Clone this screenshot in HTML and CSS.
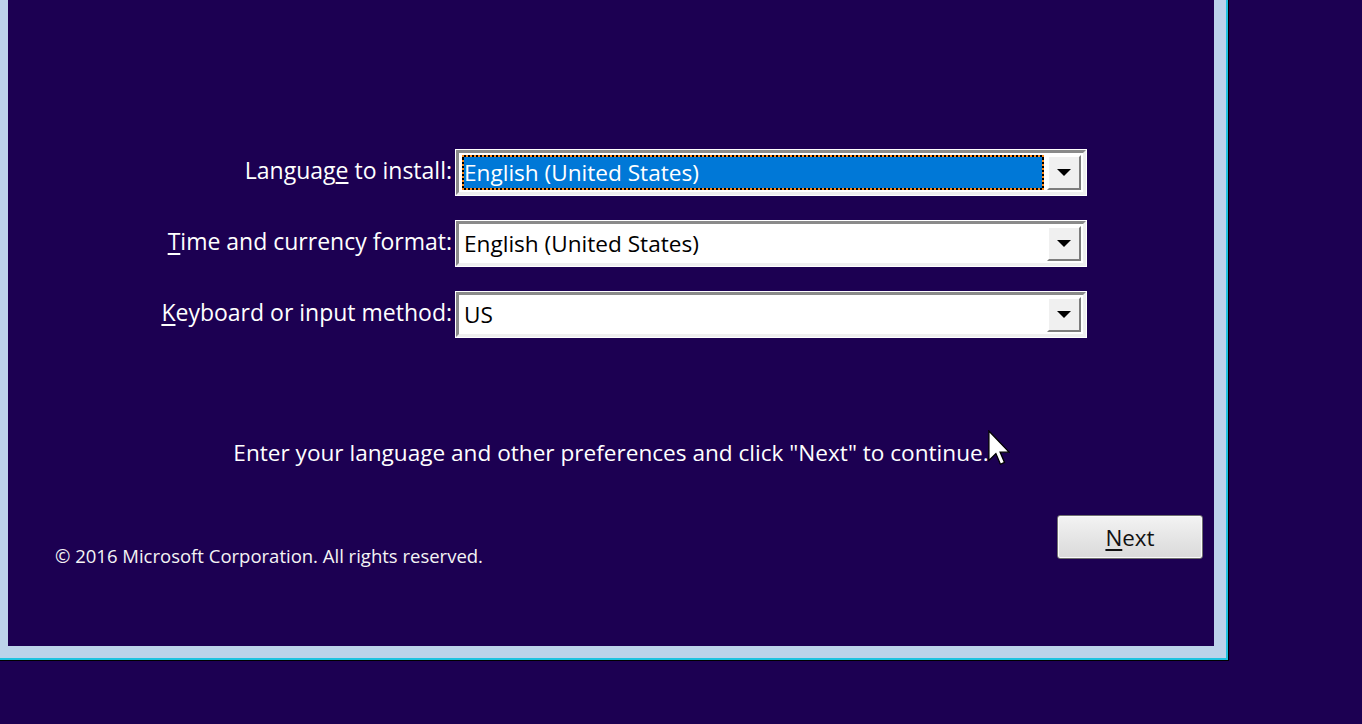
FILE: index.html
```html
<!DOCTYPE html>
<html lang="en">
<head>
<meta charset="utf-8">
<title>Windows Setup</title>
<link rel="stylesheet" href="styles.css">
</head>
<body>
<div class="shadow">
  <div class="edge">
    <div class="window">
      <div class="content">
        <div class="form">
          <label class="label">Languag<u>e</u> to install:</label>
          <div class="select">
            <div class="value focused">English (United States)</div>
            <div class="arrow"><span class="tri"></span></div>
          </div>
          <label class="label"><u>T</u>ime and currency format:</label>
          <div class="select">
            <div class="value">English (United States)</div>
            <div class="arrow"><span class="tri"></span></div>
          </div>
          <label class="label"><u>K</u>eyboard or input method:</label>
          <div class="select">
            <div class="value">US</div>
            <div class="arrow"><span class="tri"></span></div>
          </div>
        </div>
        <p class="hint">Enter your language and other preferences and click "Next" to continue.</p>
        <div class="footer">
          <span class="copy">© 2016 Microsoft Corporation. All rights reserved.</span>
          <button class="next"><u>N</u>ext</button>
        </div>
      </div>
    </div>
  </div>
</div>
<svg class="cursor" width="22" height="36" viewBox="0 0 12 19.5">
  <path d="M0.5 0.5 L0.5 16.5 L4.3 12.8 L6.8 18.6 L9 17.6 L6.6 12 L11.5 12 Z" fill="#fff" stroke="#000" stroke-width="0.7" stroke-linejoin="miter"/>
</svg>
</body>
</html>
```
FILE: styles.css
```css
html, body {
  margin: 0;
  padding: 0;
}
body {
  background: #1c0052;
  width: 1362px;
  height: 724px;
  overflow: hidden;
  position: relative;
  font-family: "Open Sans", "Noto Sans", sans-serif;
  color: #fff;
}
.shadow {
  width: 1229px;
  border-right: 1px solid #000;
  border-bottom: 1px solid #000;
  box-sizing: border-box;
}
.edge {
  border-right: 2px solid #1fc3e0;
  border-bottom: 2px solid #1fc3e0;
}
.window {
  border-left: 8px solid #bcd3ea;
  border-right: 12px solid #bcd3ea;
  border-bottom: 12px solid #bcd3ea;
}
.content {
  height: 646px;
  background: #1c0052;
  display: flex;
  flex-direction: column;
}
.form {
  margin-top: 150px;
  display: grid;
  grid-template-columns: 444px 630px;
  column-gap: 4px;
  row-gap: 26px;
}
.label {
  font-size: 23px;
  text-align: right;
  align-self: center;
  margin-top: -6px;
  white-space: nowrap;
}
.label u, .next u {
  text-underline-offset: 3px;
}
.select {
  height: 45px;
  box-sizing: border-box;
  border: 3px solid;
  border-color: #8a8a8a #efefef #efefef #8a8a8a;
  box-shadow: 0 0 0 1px #ffffff;
  background: #fff;
  padding: 2px 2px 2px 3px;
  display: flex;
  gap: 3px;
}
.value {
  flex: 1;
  color: #000;
  font-size: 22.6px;
  line-height: 35px;
  padding-left: 2px;
  box-sizing: border-box;
  white-space: nowrap;
}
.value.focused {
  color: #fff;
  border: 2px dotted #ff8a1c;
  padding-left: 0;
  line-height: 32px;
  background: linear-gradient(#0078d7, #0078d7) padding-box, linear-gradient(#000, #000) border-box;
}
.arrow {
  width: 34px;
  box-sizing: border-box;
  background: #f0f0f0;
  border: 2px solid;
  border-color: #ffffff #7d7d7d #7d7d7d #ffffff;
  display: flex;
  align-items: center;
  justify-content: center;
}
.tri {
  width: 0;
  height: 0;
  border-left: 7px solid transparent;
  border-right: 7px solid transparent;
  border-top: 7px solid #000;
}
.hint {
  margin: 101px 0 0;
  text-align: center;
  font-size: 22.6px;
  line-height: 30px;
}
.footer {
  margin-top: 47px;
  display: flex;
  justify-content: space-between;
  align-items: flex-start;
  padding: 0 11px 0 47px;
}
.copy {
  margin-top: 28px;
  font-size: 18.5px;
  color: #f4f4f4;
}
.next {
  width: 146px;
  height: 44px;
  border: 1px solid #6f6f6f;
  border-radius: 3px;
  box-shadow: inset 0 0 0 1px #fafafa;
  background: linear-gradient(#f3f3f3, #e6e6e6 50%, #dadada);
  font-family: "Open Sans", "Noto Sans", sans-serif;
  font-size: 22.4px;
  color: #111;
  padding: 0;
}
.cursor {
  position: absolute;
  left: 988px;
  top: 430px;
}
```
